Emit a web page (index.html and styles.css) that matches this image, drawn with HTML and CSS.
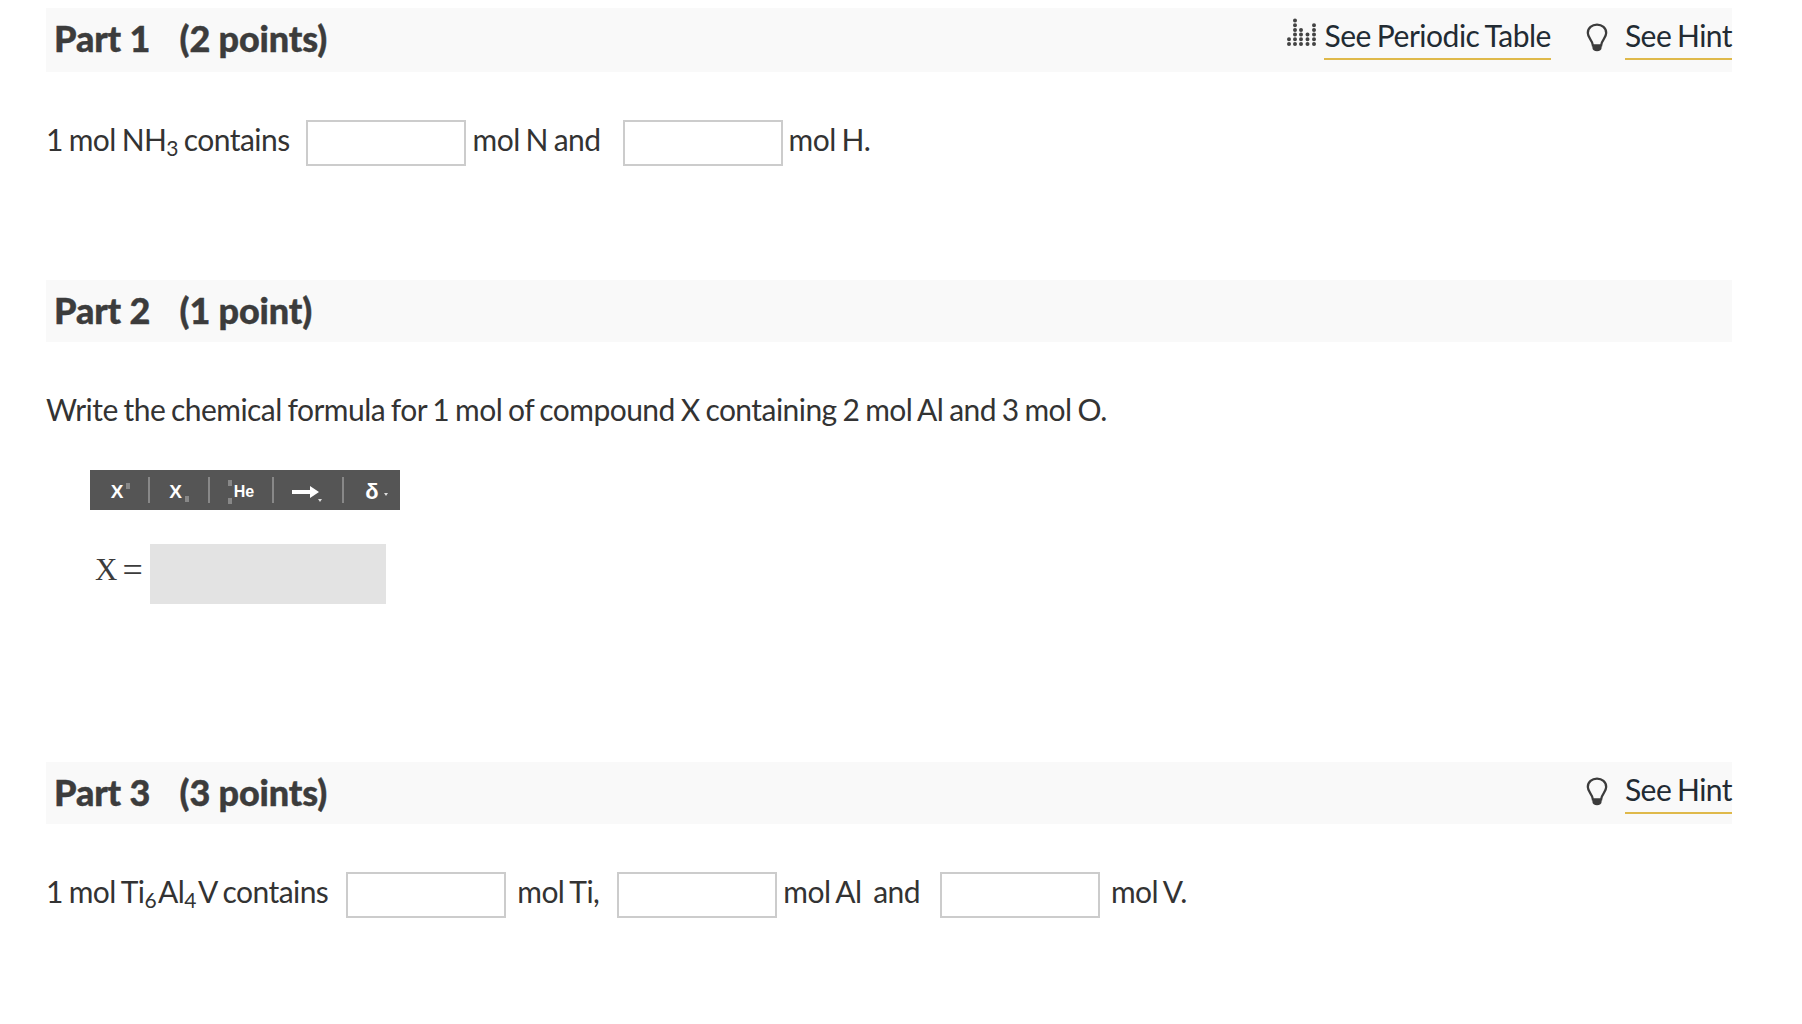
FILE: index.html
```html
<!DOCTYPE html>
<html lang="en">
<head>
    <meta charset="UTF-8">
    <title>Parts</title>
    <link rel="stylesheet" href="styles.css">
</head>
<body>

    <div class="part part-one">
        <div class="part-head">
            <h2>Part 1 <span class="points">(2 points)</span></h2>
            <div class="links">
                <span class="link-item">
                    <svg class="icon-table" width="30" height="28" viewBox="0 0 30 28">
                        <g fill="none" stroke="#444" stroke-width="4" stroke-linecap="round" stroke-dasharray="0 4.7">
                            <path d="M2 26V20"/>
                            <path d="M8 26V1"/>
                            <path d="M14 26V10"/>
                            <path d="M20.500 26V15"/>
                            <path d="M27 26V6"/>
                        </g>
                    </svg>
                    <a class="see-link table-link">See Periodic Table</a>
                </span>
                <span class="link-item hint">
                    <svg class="icon-bulb" width="22" height="30" viewBox="0 0 24 32">
                        <path d="M7.5 24 C7 18 2 16 2 10.500 C2 5 6.500 1.500 12 1.500 C17.500 1.500 22 5 22 10.500 C22 16 17 18 16.500 24 Z" fill="none" stroke="#3c3c3c" stroke-width="2.500"/>
                        <path d="M7 24 H17 V27 C17 29 15 30.500 12 30.500 C9 30.500 7 29 7 27 Z" fill="#3c3c3c"/>
                    </svg>
                    <a class="see-link">See Hint</a>
                </span>
            </div>
        </div>
        <div class="line">
            <span class="text">1 mol NH<sub>3</sub> contains</span>
            <input class="answer first" type="text">
            <span class="text unit wider">mol N and</span>
            <input class="answer second" type="text">
            <span class="text unit">mol H.</span>
        </div>
    </div>

    <div class="part part-two">
        <div class="part-head">
            <h2>Part 2 <span class="points">(1 point)</span></h2>
        </div>
        <p class="question">Write the chemical formula for 1 mol of compound X containing 2 mol Al and 3 mol O.</p>
        <div class="toolbar">
            <span class="tool tool-sup">X<i class="box box-sup"></i></span>
            <span class="tool tool-sub">X<i class="box box-sub"></i></span>
            <span class="tool tool-he"><i class="he-boxes"><i class="box"></i><i class="box"></i></i>He</span>
            <span class="tool tool-arrow">
                <svg width="27" height="14" viewBox="0 0 27 14"><path d="M0 5 H18 V1 L27 7 L18 13 V9 H0 Z" fill="#fff"/></svg>
                <i class="caret"></i>
            </span>
            <span class="tool tool-delta">δ<i class="caret"></i></span>
        </div>
        <div class="formula">
            <span class="math-x">X</span><span class="math-eq">=</span>
            <div class="formula-box"></div>
        </div>
    </div>

    <div class="part part-three">
        <div class="part-head">
            <h2>Part 3 <span class="points">(3 points)</span></h2>
            <div class="links">
                <span class="link-item hint">
                    <svg class="icon-bulb" width="22" height="30" viewBox="0 0 24 32">
                        <path d="M7.5 24 C7 18 2 16 2 10.500 C2 5 6.500 1.500 12 1.500 C17.500 1.500 22 5 22 10.500 C22 16 17 18 16.500 24 Z" fill="none" stroke="#3c3c3c" stroke-width="2.500"/>
                        <path d="M7 24 H17 V27 C17 29 15 30.500 12 30.500 C9 30.500 7 29 7 27 Z" fill="#3c3c3c"/>
                    </svg>
                    <a class="see-link">See Hint</a>
                </span>
            </div>
        </div>
        <div class="line">
            <span class="text">1 mol Ti<sub>6</sub>Al<sub>4</sub>V contains</span>
            <input class="answer third" type="text">
            <span class="text unit wide">mol Ti,</span>
            <input class="answer fourth" type="text">
            <span class="text unit">mol Al&nbsp; and</span>
            <input class="answer fifth" type="text">
            <span class="text unit wide">mol V.</span>
        </div>
    </div>

</body>
</html>
```

FILE: styles.css
```css
body {
    margin: 0;
    padding: 8px 70px 0 46px;
    font-family: Lato, "Open Sans", sans-serif;
    font-size: 30px;
    letter-spacing: -0.55px;
    word-spacing: -1.3px;
    color: #333;
    background: #fff;
}
.part-head {
    display: flex;
    justify-content: space-between;
    height: 62px;
    background: #f9f9f9;
    padding-left: 8px;
}
.part-one .part-head {
    height: 64px;
}
.part-head h2 {
    margin: 0;
    font-size: 36px;
    line-height: 60px;
    font-weight: 900;
    letter-spacing: -0.15px;
    word-spacing: 0;
    -webkit-text-stroke: 0.4px #3c3c3c;
    color: #3c3c3c;
}
.points {
    margin-left: 21px;
}
.links {
    display: flex;
    align-items: flex-start;
}
.link-item {
    display: flex;
    align-items: flex-start;
    margin-left: 35px;
}
.see-link {
    margin-top: 9px;
    height: 43px;
    line-height: 36px;
    color: #222b33;
    border-bottom: 2px solid #dfb94b;
    box-sizing: border-box;
}
.table-link {
    letter-spacing: -0.48px;
}
.icon-table {
    margin: 10px 7px 0 0;
}
.icon-bulb {
    margin: 15px 17px 0 0;
}
.line {
    margin: 48px 0 0;
    display: flex;
    align-items: flex-start;
    white-space: pre;
    height: 46px;
    line-height: 36px;
}
.text {
    margin-top: 1px;
}
sub {
    font-size: 21px;
    line-height: 0;
    vertical-align: -5px;
}
.part-three sub {
    margin-right: 2px;
}
.answer {
    width: 160px;
    height: 46px;
    box-sizing: border-box;
    border: 2px solid #ccc;
    background: #fff;
    padding: 0;
    margin: 0;
}
.first { margin-left: 16px; }
.second { margin-left: 22px; }
.unit { margin-left: 6px; }
.unit.wider { margin-left: 7px; }
.unit.wide { margin-left: 11px; }
.third { margin-left: 18px; }
.fourth { margin-left: 18px; }
.fifth { margin-left: 20px; }
.part-two {
    margin-top: 114px;
}
.question {
    margin: 49px 0 0;
    line-height: 36px;
}
.toolbar {
    display: flex;
    align-items: center;
    width: 310px;
    height: 40px;
    margin: 43px 0 0 44px;
    background: #555;
    color: #fff;
    font-family: "Liberation Sans", Arial, sans-serif;
    font-weight: 700;
    font-size: 19px;
    letter-spacing: 0;
    word-spacing: 0;
}
.tool {
    position: relative;
    display: flex;
    align-items: center;
    justify-content: center;
    height: 26px;
    padding-top: 4px;
    border-right: 2px solid #888;
    box-sizing: border-box;
}
.tool-sup { width: 60px; padding-left: 3px; }
.tool-sub { width: 60px; }
.tool-he { width: 64px; font-size: 16px; }
.tool-arrow { width: 70px; padding-right: 6px; }
.tool-delta { flex: 1; border-right: none; font-size: 22px; }
.box {
    display: block;
    width: 4px;
    height: 6px;
    background: #888;
}
.box-sup { margin: -12px 0 0 3px; }
.box-sub { margin: 14px 0 0 3px; }
.he-boxes {
    display: flex;
    flex-direction: column;
    gap: 12px;
    margin-right: 2px;
}
.caret {
    position: absolute;
    right: 20px;
    bottom: 1px;
    border-left: 2px solid transparent;
    border-right: 2px solid transparent;
    border-top: 3px solid #ddd;
}
.tool-delta .caret {
    right: 12px;
    bottom: 7px;
}
.formula {
    display: flex;
    align-items: flex-start;
    margin: 34px 0 0 49px;
    height: 60px;
    font-family: "Liberation Serif", serif;
    font-size: 31px;
    line-height: 52px;
    letter-spacing: 0;
    word-spacing: 0;
    color: #3c3c3c;
}
.math-eq {
    margin-left: 5px;
    font-size: 36px;
}
.formula-box {
    width: 236px;
    height: 60px;
    margin-left: 7px;
    background: #e3e3e3;
}
.part-three {
    margin-top: 158px;
}
```
